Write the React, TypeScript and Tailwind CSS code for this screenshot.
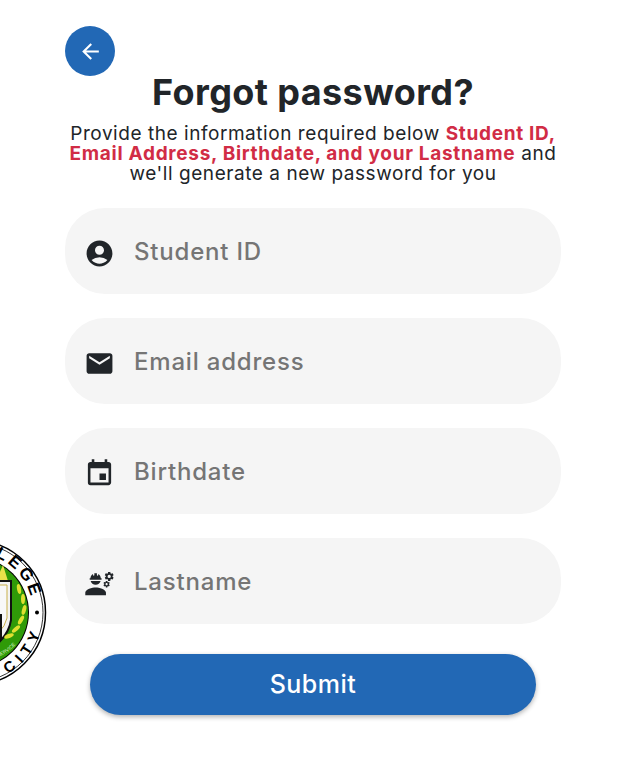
import { MdAccountCircle, MdArrowBack, MdEmail, MdEngineering, MdEvent } from "react-icons/md";

const fields = [
  { label: "Student ID", Icon: MdAccountCircle },
  { label: "Email address", Icon: MdEmail },
  { label: "Birthdate", Icon: MdEvent },
  { label: "Lastname", Icon: MdEngineering },
];

function Seal() {
  return (
    <svg className="absolute left-0 top-[542px]" width="48" height="140" viewBox="0 0 48 140">
      <defs>
        <path id="sealTop" d="M -86 70.5 A 59.5 59.5 0 0 1 31.5 57.1" />
        <path id="sealBottom" d="M -96.5 70.5 A 70 70 0 0 0 41.7 86.2" />
        <path id="sealBand" d="M -2 115 Q 10 110 20 98" />
      </defs>
      <circle cx="-26.5" cy="70.5" r="72" fill="#fff" stroke="#000" strokeWidth="1.5" />
      <circle cx="-26.5" cy="70.5" r="69.5" fill="none" stroke="#000" strokeWidth="0.8" />
      <circle cx="-26.5" cy="70.5" r="55.5" fill="#000" />
      <circle cx="-26.5" cy="70.5" r="54.5" fill="#2f9a08" />
      <path d="M -4 39 L 3 23 L 8 39 Z" fill="#e8e24a" />
      <path d="M -24 39 H 11 V 78 Q 8 100 -24 116 Z" fill="#f2f2f2" stroke="#111" strokeWidth="2" />
      <path d="M -24 43 H 7 V 76 Q 4 92 -24 106 Z" fill="#f8f8f8" stroke="#c9b04a" strokeWidth="1" />
      <rect x="-4" y="72" width="6" height="26" fill="#111" />
      <g fill="#dfe030">
        <ellipse cx="19" cy="47" rx="2" ry="5" transform="rotate(-10 19 47)" />
        <ellipse cx="23" cy="57" rx="2" ry="5" transform="rotate(0 23 57)" />
        <ellipse cx="24" cy="68" rx="2" ry="5" transform="rotate(15 24 68)" />
        <ellipse cx="21" cy="78" rx="2" ry="5" transform="rotate(30 21 78)" />
        <ellipse cx="16" cy="87" rx="2" ry="5" transform="rotate(50 16 87)" />
        <ellipse cx="9" cy="94" rx="2" ry="5" transform="rotate(70 9 94)" />
      </g>
      <text fill="#d9f2c8" fontFamily="'Liberation Sans', sans-serif" fontSize="5">
        <textPath href="#sealBand">SERVICE</textPath>
      </text>
      <text fill="#000" fontFamily="'Liberation Sans', sans-serif" fontWeight="700" fontSize="17" letterSpacing="3" textAnchor="end">
        <textPath href="#sealTop" startOffset="100%">COLLEGE</textPath>
      </text>
      <text fill="#000" fontFamily="'Liberation Sans', sans-serif" fontWeight="700" fontSize="15" letterSpacing="6" textAnchor="end">
        <textPath href="#sealBottom" startOffset="100%">CITY</textPath>
      </text>
      <circle cx="37" cy="70.5" r="2" fill="#000" />
    </svg>
  );
}

export default function App() {
  return (
    <div className="relative h-[778px] w-[617px] overflow-hidden bg-white font-['Inter','Open_Sans',sans-serif] text-[#212529]">
      <Seal />
      <div className="ml-[65px] flex w-[496px] flex-col pt-[26px]">
        <button className="flex h-[50px] w-[50px] items-center justify-center rounded-full bg-[#2268b5] text-white">
          <MdArrowBack size={25} />
        </button>
        <h1 className="mt-[-4px] text-center text-[36px] leading-[40px] font-bold tracking-[0.4px]">Forgot password?</h1>
        <p className="mt-[12px] text-center text-[19px] leading-[20px] tracking-[0.55px]">
          Provide the information required below{" "}
          <span className="font-bold tracking-[0.7px] text-[#d12c45]">
            Student ID,
            <br />
            Email Address, Birthdate, and your Lastname
          </span>{" "}
          and
          <br />
          we'll generate a new password for you
        </p>
        <div className="mt-[24px] flex flex-col gap-[24px]">
          {fields.map(({ label, Icon }) => (
            <div key={label} className="flex h-[86px] items-center rounded-[40px] bg-[#f5f5f5] pl-[19px]">
              <Icon size={31} className="mt-[5px] shrink-0" />
              <span className="ml-[19px] pt-[1px] text-[24px] font-medium tracking-[0.8px] text-[#757575]">{label}</span>
            </div>
          ))}
        </div>
        <button className="mx-[25px] mt-[30px] h-[61px] rounded-full bg-[#2268b5] text-[25px] font-medium tracking-[0.5px] text-white shadow-[0_2px_5px_rgba(0,0,0,0.3)]">
          Submit
        </button>
      </div>
    </div>
  );
}
